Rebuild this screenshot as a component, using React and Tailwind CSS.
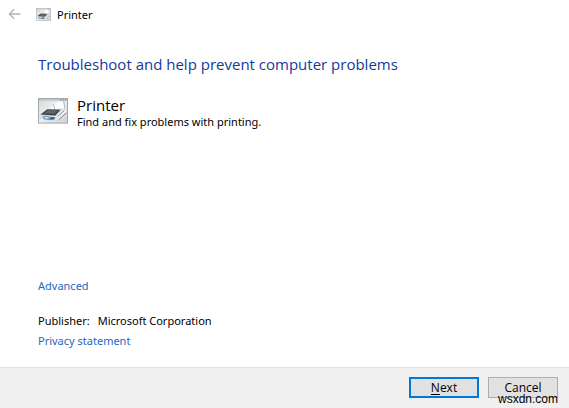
function BackArrow() {
  return (
    <svg width="14" height="12" viewBox="0 0 14 12" fill="none" stroke="#b4b4b4" strokeWidth="1.4" aria-hidden="true">
      <path d="M6 1.2 1.4 6 6 10.8M1.4 6h11" />
    </svg>
  );
}

function PrinterIcon({ className }) {
  return (
    <svg className={className} viewBox="0 0 30 26" preserveAspectRatio="none" aria-hidden="true">
      <defs>
        <linearGradient id="pane" x1="0" y1="0" x2="1" y2="1">
          <stop offset="0" stopColor="#d4d7d9" />
          <stop offset="0.45" stopColor="#eef0f0" />
          <stop offset="1" stopColor="#cfd1d3" />
        </linearGradient>
      </defs>
      <rect x="0.5" y="0.5" width="29" height="24.6" fill="url(#pane)" stroke="#a4a7a9" />
      <path d="M1 1h28v1.8H1z" fill="#c3c6c8" />
      <path d="M22 2h1.3M24.4 2h1.3M26.8 2h1.3" stroke="#74787a" strokeWidth="1" />
      <path d="M12.5 11 16 5.5 25.5 2.8 26.8 10.5 21 12.5z" fill="#fbfcfc" />
      <path d="M15.5 6 16.6 11M25.6 3 26.8 10" stroke="#a3a8ab" strokeWidth="0.8" />
      <path d="M1.5 17.6 7.5 11.5 27.5 10.5 28.5 14.6 20 22.5 2 20.4z" fill="#c8cdd0" />
      <path d="M2.6 16.6 9.5 11.2 22.4 11.8 17.4 17.4z" fill="#3b4043" />
      <path d="M5.5 15.4 10.2 12 20 12.5 16.8 15.8z" fill="#606668" />
      <path d="M18 18 25 10.8 28.2 11.6 28.2 14.6 20.6 22.2z" fill="#f1f3f4" />
      <path d="M19.6 18.8 26.6 12M20.6 21.8 28.4 14.8" stroke="#6c7275" strokeWidth="0.9" />
      <path d="M2 17.2 18 18.2 20 22.2 3 20.6z" fill="#e6ebee" />
      <path d="M4 18.6 8.5 17.8 15.5 19.6 12 22.2 6 21.6z" fill="#6f9fc3" />
      <path d="M5.6 19.4 8.5 18.7 11 19.8 8.6 21z" fill="#c5e0f2" />
      <path d="M13 18.8 17.5 19.4 16.2 21.4 12.2 21.8z" fill="#3b5d7a" />
    </svg>
  );
}

export default function App() {
  return (
    <div className="flex min-h-screen flex-col bg-white font-['Noto_Sans','Open_Sans',sans-serif] text-[11px] leading-4 text-black">
      <header className="flex h-7 items-center pl-2">
        <button type="button" aria-label="Back" disabled>
          <BackArrow />
        </button>
        <PrinterIcon className="ml-3.5 mr-1.5 h-[13px] w-[15px]" />
        <h1 className="pt-0.5">Printer</h1>
      </header>

      <main className="flex flex-1 flex-col px-[38px] pb-[18px] pt-6">
        <h2 className="font-['Open_Sans',sans-serif] text-[15px] leading-6 text-[#15399b]">
          Troubleshoot and help prevent computer problems
        </h2>
        <section className="mt-5 flex gap-[9px]">
          <PrinterIcon className="mt-0.5 h-[26px] w-[30px]" />
          <div>
            <h3 className="font-['Open_Sans',sans-serif] text-[15px] leading-[18px]">Printer</h3>
            <p>Find and fix problems with printing.</p>
          </div>
        </section>

        <div className="mt-auto">
          <a href="#advanced" className="text-[#2468c0]">Advanced</a>
          <p className="mt-[19px] flex gap-2">
            <span>Publisher:</span>
            <span>Microsoft Corporation</span>
          </p>
          <a href="#privacy" className="mt-1 block text-[#2468c0]">Privacy statement</a>
        </div>
      </main>

      <footer className="flex justify-end gap-[9px] border-t border-[#dfdfdf] bg-[#f0f0f0] pb-[10px] pr-[11px] pt-[9px]">
        <button type="button" className="h-[21px] w-[70px] border-2 border-[#0078d7] bg-[#e1e1e1] font-['Open_Sans',sans-serif] text-[12px] leading-4">
          <span className="underline underline-offset-2">N</span>ext
        </button>
        <div className="relative">
          <button type="button" className="h-[21px] w-[70px] border border-[#adadad] bg-[#e1e1e1] font-['Open_Sans',sans-serif] text-[12px] leading-4">
            Cancel
          </button>
          <span className="pointer-events-none absolute right-0 top-3.5 font-['Liberation_Sans',Arial,sans-serif] text-[12px] leading-4">
            wsxdn.com
          </span>
        </div>
      </footer>
    </div>
  );
}
